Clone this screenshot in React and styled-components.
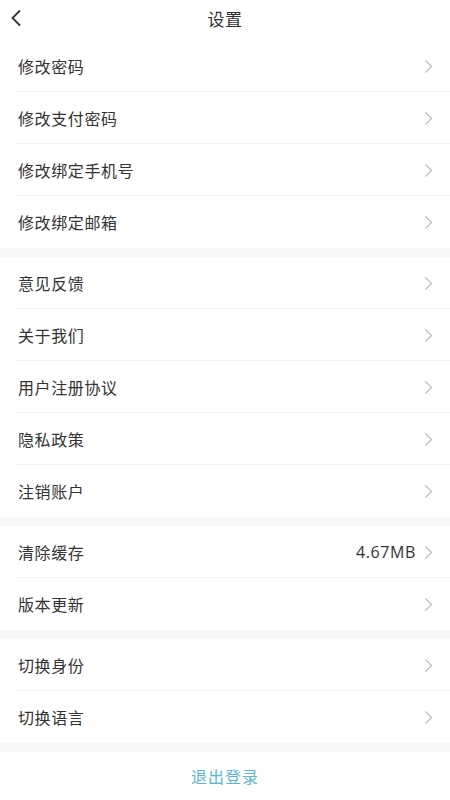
import React from "react";
import styled, { createGlobalStyle } from "styled-components";

const Global = createGlobalStyle`
  html, body { margin: 0; padding: 0; background: #fff; }
  body { font-family: "Noto Sans CJK SC", "Noto Sans", sans-serif; color: #333; }
`;

const Page = styled.div`
  width: 450px;
  min-height: 800px;
  display: flex;
  flex-direction: column;
  background: #fff;
`;

const Header = styled.div`
  height: 40px;
  display: flex;
  align-items: center;
  justify-content: center;
  position: relative;
  box-sizing: border-box;
  padding-bottom: 4px;
`;

const BackButton = styled.div`
  position: absolute;
  left: 10px;
  top: 8px;
  width: 16px;
  height: 20px;
  display: flex;
  align-items: center;
`;

const Title = styled.div`
  font-size: 17px;
  color: #333;
  line-height: 1;
  letter-spacing: 0.5px;
`;

const Group = styled.div`
  display: flex;
  flex-direction: column;
  background: #fff;
`;

const Band = styled.div`
  height: 9px;
  background: #f7f7f7;
`;

const Row = styled.div`
  height: 52px;
  display: flex;
  align-items: center;
  padding: 0 17px 0 18px;
  position: relative;
  box-sizing: border-box;
  &::after {
    content: "";
    display: ${(p) => (p.$last ? "none" : "block")};
    position: absolute;
    left: 16px;
    right: 0;
    bottom: 0;
    height: 1px;
    background: #f1f1f1;
  }
`;

const Label = styled.div`
  flex: 1;
  font-size: 16px;
  color: #333;
  letter-spacing: 0.6px;
`;

const Value = styled.div`
  font-family: "Open Sans", "Noto Sans", sans-serif;
  font-size: 16px;
  color: #333;
  margin-right: 8px;
  letter-spacing: 0.6px;
`;

const Logout = styled.div`
  height: 48px;
  display: flex;
  align-items: center;
  justify-content: center;
  font-size: 16px;
  color: #5cb6d8;
  letter-spacing: 1px;
`;

const Chevron = () => (
  <svg width="9" height="15" viewBox="0 0 9 15">
    <path d="M1.5 1.5 L7.5 7.5 L1.5 13.5" fill="none" stroke="#bdbdbd" strokeWidth="1.3" />
  </svg>
);

const BackIcon = () => (
  <svg width="12" height="18" viewBox="0 0 12 18">
    <path d="M10 1.5 L2.5 9 L10 16.5" fill="none" stroke="#333" strokeWidth="1.8" />
  </svg>
);

const groups = [
  [{ t: "修改密码" }, { t: "修改支付密码" }, { t: "修改绑定手机号" }, { t: "修改绑定邮箱" }],
  [{ t: "意见反馈" }, { t: "关于我们" }, { t: "用户注册协议" }, { t: "隐私政策" }, { t: "注销账户" }],
  [{ t: "清除缓存", v: "4.67MB" }, { t: "版本更新" }],
  [{ t: "切换身份" }, { t: "切换语言" }],
];

export default function App() {
  return (
    <Page>
      <Global />
      <Header>
        <BackButton>
          <BackIcon />
        </BackButton>
        <Title>设置</Title>
      </Header>
      {groups.map((g, gi) => (
        <React.Fragment key={gi}>
          {gi > 0 && <Band />}
          <Group>
            {g.map((r, ri) => (
              <Row key={r.t} $last={ri === g.length - 1}>
                <Label>{r.t}</Label>
                {r.v && <Value>{r.v}</Value>}
                <Chevron />
              </Row>
            ))}
          </Group>
        </React.Fragment>
      ))}
      <Band />
      <Logout>退出登录</Logout>
    </Page>
  );
}
